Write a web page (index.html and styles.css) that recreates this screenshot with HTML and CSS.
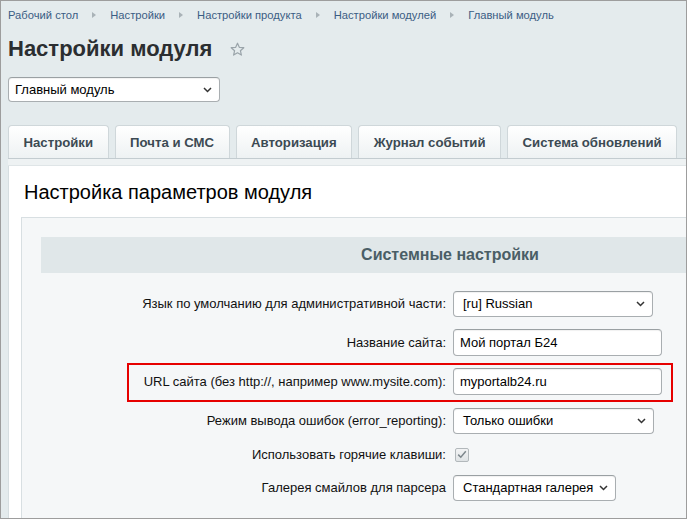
FILE: index.html
```html
<!DOCTYPE html>
<html lang="ru">
<head>
<meta charset="utf-8">
<title>Настройки модуля</title>
<link rel="stylesheet" href="styles.css">
</head>
<body>
<div class="frame">
  <div class="page">
    <nav class="crumbs">
      <a class="crumb">Рабочий стол</a>
      <span class="sep"></span>
      <a class="crumb">Настройки</a>
      <span class="sep"></span>
      <a class="crumb">Настройки продукта</a>
      <span class="sep"></span>
      <a class="crumb">Настройки модулей</a>
      <span class="sep"></span>
      <a class="crumb">Главный модуль</a>
    </nav>

    <div class="title-row">
      <h1 class="title">Настройки модуля</h1>
      <svg class="star" width="15" height="15" viewBox="0 0 15 15"><path d="M7.5 1.2 L9.3 5.3 L13.8 5.7 L10.4 8.7 L11.4 13.1 L7.5 10.8 L3.6 13.1 L4.6 8.7 L1.2 5.7 L5.7 5.3 Z" fill="none" stroke="#9aa4aa" stroke-width="1.2" stroke-linejoin="round"/></svg>
    </div>

    <div class="select select-module">
      <span>Главный модуль</span>
      <svg class="chev" width="9" height="6" viewBox="0 0 9 6"><path d="M1 1 L4.5 4.5 L8 1" fill="none" stroke="#333" stroke-width="1.5"/></svg>
    </div>

    <div class="tabs">
      <div class="tab">Настройки</div>
      <div class="tab">Почта и СМС</div>
      <div class="tab">Авторизация</div>
      <div class="tab">Журнал событий</div>
      <div class="tab">Система обновлений</div>
    </div>
    <div class="strip"></div>

    <div class="panel">
      <div class="panel-head">Настройка параметров модуля</div>
      <div class="box">
        <div class="band">Системные настройки</div>
        <div class="form">
          <div class="row">
            <div class="label">Язык по умолчанию для административной части:</div>
            <div class="field">
              <div class="select w200"><span>[ru] Russian</span><svg class="chev" width="9" height="6" viewBox="0 0 9 6"><path d="M1 1 L4.5 4.5 L8 1" fill="none" stroke="#333" stroke-width="1.5"/></svg></div>
            </div>
          </div>
          <div class="row">
            <div class="label">Название сайта:</div>
            <div class="field"><div class="input">Мой портал Б24</div></div>
          </div>
          <div class="row marked">
            <div class="label">URL сайта (без http://, например www.mysite.com):</div>
            <div class="field"><div class="input">myportalb24.ru</div></div>
            <div class="highlight"></div>
          </div>
          <div class="row">
            <div class="label">Режим вывода ошибок (error_reporting):</div>
            <div class="field">
              <div class="select w201"><span>Только ошибки</span><svg class="chev" width="9" height="6" viewBox="0 0 9 6"><path d="M1 1 L4.5 4.5 L8 1" fill="none" stroke="#333" stroke-width="1.5"/></svg></div>
            </div>
          </div>
          <div class="row row-check">
            <div class="label">Использовать горячие клавиши:</div>
            <div class="field">
              <span class="check"><svg width="10" height="9" viewBox="0 0 10 9"><path d="M1.2 4.6 L3.8 7.2 L8.8 1.2" fill="none" stroke="#7d878c" stroke-width="1.5"/></svg></span>
            </div>
          </div>
          <div class="row">
            <div class="label">Галерея смайлов для парсера</div>
            <div class="field">
              <div class="select w163"><span>Стандартная галерея</span><svg class="chev" width="9" height="6" viewBox="0 0 9 6"><path d="M1 1 L4.5 4.5 L8 1" fill="none" stroke="#333" stroke-width="1.5"/></svg></div>
            </div>
          </div>
        </div>
      </div>
    </div>
  </div>
</div>
</body>
</html>
```

FILE: styles.css
```css
* { box-sizing: border-box; }
html, body { margin: 0; padding: 0; }
body {
  font-family: "Liberation Sans", Arial, sans-serif;
  color: #000;
  background: #fff;
}
.frame {
  width: 687px;
  height: 519px;
  border: 1px solid #9d9d9d;
  overflow: hidden;
  background: #e4ebed;
}
.page {
  width: 900px;
  padding: 6px 0 0 7px;
}

/* breadcrumbs */
.crumbs {
  display: flex;
  align-items: center;
  height: 16px;
  font-size: 11.2px;
  line-height: 16px;
}
.crumb { color: #3b5d84; }
.sep {
  width: 0;
  height: 0;
  margin: 0 14px 0 14px;
  border-left: 4px solid #a9b2b7;
  border-top: 3.5px solid transparent;
  border-bottom: 3.5px solid transparent;
}

/* title */
.title-row {
  display: flex;
  align-items: center;
  margin-top: 13px;
  height: 26px;
}
.title {
  margin: 0;
  font-size: 22px;
  line-height: 26px;
  font-weight: bold;
  color: #2b2e31;
}
.star { margin-left: 18px; margin-top: 1px; }

/* selects / inputs */
.select, .input {
  display: flex;
  align-items: center;
  height: 26px;
  background: #fff;
  border: 1px solid #a9aeb1;
  border-top-color: #9aa0a3;
  border-radius: 4px;
  box-shadow: inset 0 1px 1px rgba(0,0,0,0.06);
  font-size: 13px;
  color: #000;
}
.select {
  justify-content: space-between;
  padding: 0 7px 0 9px;
}
.input { padding: 0 6px; }
.select-module {
  width: 212px;
  margin-top: 15px;
  height: 25px;
  padding-left: 6px;
}
.w200 { width: 200px; }
.w201 { width: 201px; }
.w163 { width: 163px; }
.input { width: 209px; height: 27px; }

/* tabs */
.tabs {
  display: flex;
  gap: 6px;
  margin-top: 23px;
  height: 33px;
}
.tab {
  height: 33px;
  padding: 0 14.5px;
  display: flex;
  align-items: center;
  font-size: 13.2px;
  font-weight: bold;
  color: #3c4a53;
  background: linear-gradient(#ffffff, #eef2f3);
  border: 1px solid #cfd7da;
  border-bottom: none;
  border-radius: 4px 4px 0 0;
}
.strip {
  height: 8px;
  border-top: 1px solid #c3ccd0;
  border-bottom: 1px solid #dfe5e7;
  background: #eef2f3;
}

/* panel */
.panel {
  background: #fff;
  border-left: 1px solid #d6dee1;
  padding: 14px 0 0 12px;
  height: 400px;
}
.panel-head {
  font-size: 20px;
  line-height: 24px;
  padding-left: 3px;
  color: #000;
}
.box {
  margin-top: 13px;
  background: #f5f7f8;
  border: 1px solid #d8dfe2;
  padding: 19px 19px 0 19px;
  height: 400px;
  width: 860px;
}
.band {
  width: 818px;
  height: 36px;
  display: flex;
  align-items: center;
  justify-content: center;
  background: #e0e7e9;
  font-size: 16px;
  font-weight: bold;
  color: #4a5e66;
}
.form {
  width: 818px;
  padding-top: 11px;
}
.row {
  position: relative;
  display: grid;
  grid-template-columns: 1fr 1fr;
  align-items: center;
  height: 39px;
  font-size: 13px;
}
.row-check { height: 28px; }
.label {
  text-align: right;
  padding-right: 4px;
  color: #111;
}
.field {
  padding-left: 3px;
  display: flex;
  align-items: center;
}
.check {
  width: 14px;
  height: 14px;
  margin-left: 2px;
  margin-top: 1px;
  display: flex;
  align-items: center;
  justify-content: center;
  border: 1px solid #b2b8bb;
  border-radius: 2px;
  background: linear-gradient(#f2f3f4, #dfe3e5);
}
.highlight {
  position: absolute;
  left: 86px;
  top: 1px;
  width: 546px;
  height: 39px;
  border: 2px solid #e60000;
  pointer-events: none;
}
```
